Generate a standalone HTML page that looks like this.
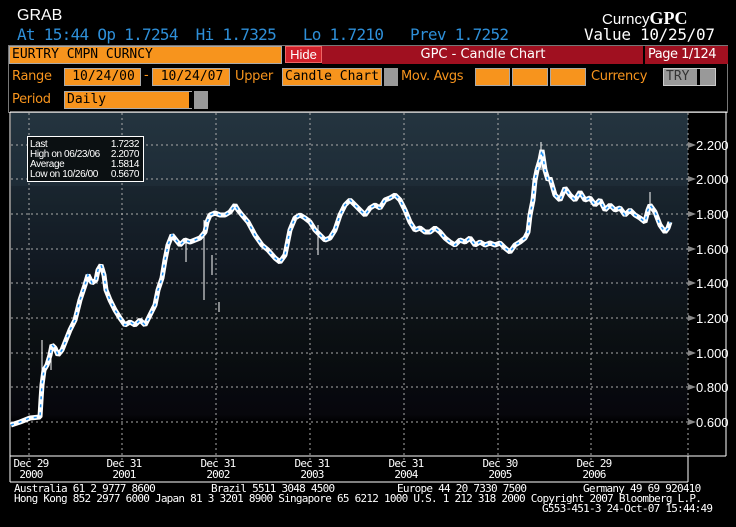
<!DOCTYPE html>
<html><head><meta charset="utf-8"><style>
*{margin:0;padding:0;box-sizing:border-box}
body{width:736px;height:527px;background:#000;position:relative;overflow:hidden;font-family:"Liberation Sans",sans-serif}
.a{position:absolute;white-space:nowrap}
.m{font-family:"DejaVu Sans Mono","Liberation Mono",monospace}
.o{color:#f7941d;font-size:13px;font-family:"DejaVu Sans",sans-serif;letter-spacing:-0.3px}
.box{position:absolute;background:#f7941d;border:1px solid #aaa;color:#000;font-size:13px;line-height:16px;padding-left:2px;font-family:"DejaVu Sans Mono",monospace}
.g{position:absolute;background:#999}
.ft{font-size:11px;color:#fff;font-family:"DejaVu Sans Mono",monospace;letter-spacing:-0.75px;line-height:10px}
</style></head><body>
<div class="a" style="left:17px;top:7px;color:#fff;font-size:16px">GRAB</div>
<div class="a m" style="left:17px;top:25px;color:#2e8fd8;font-size:16px;letter-spacing:-0.7px">At 15:44 Op 1.7254&nbsp; Hi 1.7325&nbsp;&nbsp; Lo 1.7210&nbsp;&nbsp; Prev 1.7252</div>
<div class="a" style="left:602px;top:8px;color:#fff;font-size:15px">Curncy<b style="font-family:'Liberation Serif',serif;font-size:18px">GPC</b></div>
<div class="a m" style="left:584px;top:25px;color:#fff;font-size:16px;letter-spacing:-0.3px">Value 10/25/07</div>
<div class="a" style="left:8px;top:45px;width:720px;height:68px;border:1px solid #777"></div>
<div class="box" style="left:9px;top:46px;width:273px;height:18px;line-height:15px">EURTRY CMPN CURNCY</div>
<div class="a" style="left:285px;top:46px;width:37px;height:17px;background:#d0202a;border:1px solid #e66;color:#fff;font-size:13px;line-height:15px;text-align:center">Hide</div>
<div class="a" style="left:322px;top:46px;width:406px;height:18px;background:#a01020"></div>
<div class="a" style="left:322px;top:46px;width:322px;color:#fff;font-size:13px;line-height:17px;text-align:center;font-family:'DejaVu Sans',sans-serif">GPC - Candle Chart</div>
<div class="a" style="left:643px;top:46px;width:2px;height:18px;background:#000"></div>
<div class="a" style="left:648px;top:46px;color:#fff;font-size:13px;line-height:17px;font-family:'DejaVu Sans',sans-serif;letter-spacing:-0.5px">Page 1/124</div>
<div class="a o" style="left:12px;top:69px">Range</div>
<div class="box" style="left:64px;top:68px;width:77px;height:18px;text-align:center">10/24/00</div>
<div class="a o" style="left:144px;top:68px">-</div>
<div class="box" style="left:152px;top:68px;width:78px;height:18px;text-align:center">10/24/07</div>
<div class="a o" style="left:235px;top:69px">Upper</div>
<div class="box" style="left:282px;top:68px;width:100px;height:18px">Candle Chart</div>
<div class="g" style="left:384px;top:68px;width:14px;height:18px"></div>
<div class="a o" style="left:401px;top:69px">Mov. Avgs</div>
<div class="box" style="left:475px;top:68px;width:35px;height:18px"></div>
<div class="box" style="left:512px;top:68px;width:36px;height:18px"></div>
<div class="box" style="left:550px;top:68px;width:36px;height:18px"></div>
<div class="a o" style="left:591px;top:69px">Currency</div>
<div class="a" style="left:663px;top:68px;width:53px;height:18px;background:#999;border:1px solid #ccc;font-size:13px;line-height:15px;padding-left:2px;font-family:'DejaVu Sans Mono',monospace;color:#333">TRY</div>
<div class="a" style="left:697px;top:69px;width:3px;height:16px;background:#000"></div>
<div class="a o" style="left:12px;top:92px">Period</div>
<div class="box" style="left:64px;top:91px;width:128px;height:18px">Daily</div>
<div class="a" style="left:189px;top:92px;width:3px;height:16px;background:#000"></div>
<div class="g" style="left:194px;top:91px;width:14px;height:18px"></div>

<svg class="a" style="left:0;top:0" width="736" height="527">
<defs><linearGradient id="bg" x1="0" y1="0" x2="0" y2="1">
<stop offset="0" stop-color="#24343f"/><stop offset="0.2" stop-color="#1e2c37"/><stop offset="0.45" stop-color="#141c26"/><stop offset="0.65" stop-color="#0d1316"/><stop offset="0.88" stop-color="#08080e"/><stop offset="0.9" stop-color="#000"/><stop offset="1" stop-color="#000"/></linearGradient></defs>
<rect x="11" y="113" width="677" height="343" fill="url(#bg)"/>
<g fill="#000" opacity="0.12">
<rect x="11" y="186" width="677" height="270"/><rect x="11" y="276" width="677" height="180"/><rect x="11" y="380" width="677" height="76"/></g>
<line x1="10" y1="112" x2="10" y2="482" stroke="#fff"/>
<line x1="10" y1="112" x2="727" y2="112" stroke="#fff"/>
<line x1="726" y1="112" x2="726" y2="456" stroke="#fff"/>
<line x1="688" y1="456" x2="726" y2="456" stroke="#fff"/>
<line x1="10" y1="456" x2="688" y2="456" stroke="#fff"/>
<line x1="10" y1="482" x2="688" y2="482" stroke="#fff"/>
<line x1="688" y1="456" x2="688" y2="482" stroke="#fff"/>
<g stroke="#aaa" stroke-dasharray="2,3" stroke-width="1">
<line x1="11" y1="145" x2="688" y2="145"/><line x1="11" y1="179" x2="688" y2="179"/><line x1="11" y1="214" x2="688" y2="214"/><line x1="11" y1="249" x2="688" y2="249"/><line x1="11" y1="283" x2="688" y2="283"/><line x1="11" y1="318" x2="688" y2="318"/><line x1="11" y1="353" x2="688" y2="353"/><line x1="11" y1="387" x2="688" y2="387"/><line x1="11" y1="422" x2="688" y2="422"/>
<line x1="29" y1="113" x2="29" y2="460"/><line x1="122" y1="113" x2="122" y2="460"/><line x1="216" y1="113" x2="216" y2="460"/><line x1="310" y1="113" x2="310" y2="460"/><line x1="404" y1="113" x2="404" y2="460"/><line x1="498" y1="113" x2="498" y2="460"/><line x1="591" y1="113" x2="591" y2="460"/><line x1="688" y1="113" x2="688" y2="456"/>
</g>
<g fill="#888"><polygon points="688,142 696,145 688,148"/><polygon points="688,176 696,179 688,182"/><polygon points="688,211 696,214 688,217"/><polygon points="688,246 696,249 688,252"/><polygon points="688,280 696,283 688,286"/><polygon points="688,315 696,318 688,321"/><polygon points="688,350 696,353 688,356"/><polygon points="688,384 696,387 688,390"/><polygon points="688,419 696,422 688,425"/></g>
<g fill="#fff" font-size="13" font-family="Liberation Sans,sans-serif">
<text x="696" y="150">2.200</text><text x="696" y="184">2.000</text><text x="696" y="219">1.800</text><text x="696" y="254">1.600</text><text x="696" y="288">1.400</text><text x="696" y="323">1.200</text><text x="696" y="358">1.000</text><text x="696" y="392">0.800</text><text x="696" y="427">0.600</text></g>
<g stroke="#fff" stroke-width="1"><line x1="42" y1="340" x2="42" y2="400"/><line x1="51" y1="355" x2="51" y2="370"/><line x1="204" y1="220" x2="204" y2="300"/><line x1="219" y1="302" x2="219" y2="312"/><line x1="212" y1="255" x2="212" y2="275"/><line x1="541" y1="142" x2="541" y2="170"/><line x1="650" y1="192" x2="650" y2="215"/><line x1="318" y1="225" x2="318" y2="255"/><line x1="186" y1="240" x2="186" y2="262"/></g>
<polyline fill="none" stroke="#fff" stroke-width="5" stroke-linejoin="bevel" points="11,425 20,422 30,418 40,417 41,400 42,385 44,370 47,365 50,355 52,345 55,348 58,355 62,350 66,340 70,330 75,320 80,300 85,285 88,275 92,283 96,280 98,270 101,265 104,275 106,290 110,300 115,310 120,318 125,325 130,322 135,325 140,320 145,325 150,315 155,305 158,290 162,278 165,260 168,245 172,235 176,240 180,245 185,240 190,242 195,240 200,238 205,232 207,222 210,215 215,213 220,215 225,215 230,212 235,205 238,210 242,215 248,222 255,235 262,245 268,250 275,258 280,262 285,255 290,230 295,218 300,215 305,218 310,222 315,230 320,235 325,240 330,238 335,230 340,215 345,205 350,200 355,205 360,210 365,215 370,208 375,205 380,208 385,200 390,198 395,195 400,200 405,210 410,222 415,230 420,228 425,232 430,232 435,228 440,232 445,238 450,242 455,245 460,240 465,242 470,238 475,245 480,242 485,245 490,243 495,245 500,243 505,248 510,252 515,245 520,242 525,238 528,232 530,215 533,200 535,180 537,170 540,160 542,150 545,170 548,180 550,178 555,195 560,200 565,188 570,195 575,200 580,192 585,200 590,198 595,205 600,200 605,210 610,205 615,210 620,208 625,215 630,210 635,215 640,218 645,222 648,210 650,205 655,212 660,225 665,232 668,228 670,222"/>
<polyline fill="none" stroke="#1e8ef0" stroke-width="1.5" stroke-dasharray="3,5" points="11,425 20,422 30,418 40,417 41,400 42,385 44,370 47,365 50,355 52,345 55,348 58,355 62,350 66,340 70,330 75,320 80,300 85,285 88,275 92,283 96,280 98,270 101,265 104,275 106,290 110,300 115,310 120,318 125,325 130,322 135,325 140,320 145,325 150,315 155,305 158,290 162,278 165,260 168,245 172,235 176,240 180,245 185,240 190,242 195,240 200,238 205,232 207,222 210,215 215,213 220,215 225,215 230,212 235,205 238,210 242,215 248,222 255,235 262,245 268,250 275,258 280,262 285,255 290,230 295,218 300,215 305,218 310,222 315,230 320,235 325,240 330,238 335,230 340,215 345,205 350,200 355,205 360,210 365,215 370,208 375,205 380,208 385,200 390,198 395,195 400,200 405,210 410,222 415,230 420,228 425,232 430,232 435,228 440,232 445,238 450,242 455,245 460,240 465,242 470,238 475,245 480,242 485,245 490,243 495,245 500,243 505,248 510,252 515,245 520,242 525,238 528,232 530,215 533,200 535,180 537,170 540,160 542,150 545,170 548,180 550,178 555,195 560,200 565,188 570,195 575,200 580,192 585,200 590,198 595,205 600,200 605,210 610,205 615,210 620,208 625,215 630,210 635,215 640,218 645,222 648,210 650,205 655,212 660,225 665,232 668,228 670,222"/>
<rect x="27.5" y="136.5" width="116" height="45" fill="#0b1012" stroke="#fff"/>
<g fill="#fff" font-size="10" font-family="Liberation Sans,sans-serif" letter-spacing="-0.4">
<text x="30" y="147">Last</text><text x="139" y="147" text-anchor="end">1.7232</text>
<text x="30" y="157">High on  06/23/06</text><text x="139" y="157" text-anchor="end">2.2070</text>
<text x="30" y="167">Average</text><text x="139" y="167" text-anchor="end">1.5814</text>
<text x="30" y="177">Low on  10/26/00</text><text x="139" y="177" text-anchor="end">0.5670</text></g>
<g fill="#fff" font-size="11" font-family="DejaVu Sans Mono,monospace" text-anchor="middle" letter-spacing="-0.8">
<text x="31" y="467">Dec 29</text><text x="31" y="478">2000</text>
<text x="124" y="467">Dec 31</text><text x="124" y="478">2001</text>
<text x="218" y="467">Dec 31</text><text x="218" y="478">2002</text>
<text x="312" y="467">Dec 31</text><text x="312" y="478">2003</text>
<text x="406" y="467">Dec 31</text><text x="406" y="478">2004</text>
<text x="500" y="467">Dec 30</text><text x="500" y="478">2005</text>
<text x="594" y="467">Dec 29</text><text x="594" y="478">2006</text></g>
</svg>
<div class="a ft" style="left:14px;top:484px">Australia 61 2 9777 8600</div>
<div class="a ft" style="left:211px;top:484px">Brazil 5511 3048 4500</div>
<div class="a ft" style="left:397px;top:484px">Europe 44 20 7330 7500</div>
<div class="a ft" style="left:583px;top:484px">Germany 49 69 920410</div>
<div class="a ft" style="left:14px;top:494px">Hong Kong 852 2977 6000 Japan 81 3 3201 8900 Singapore 65 6212 1000 U.S. 1 212 318 2000 Copyright 2007 Bloomberg L.P.</div>
<div class="a ft" style="left:542px;top:504px">G553-451-3 24-Oct-07 15:44:49</div>
</body></html>
